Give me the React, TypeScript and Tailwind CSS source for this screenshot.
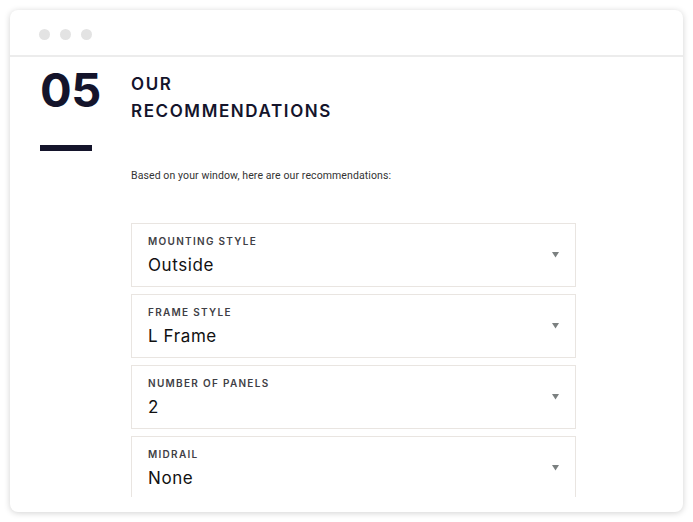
const fields = [
  { label: "MOUNTING STYLE", value: "Outside" },
  { label: "FRAME STYLE", value: "L Frame" },
  { label: "NUMBER OF PANELS", value: "2" },
  { label: "MIDRAIL", value: "None" },
]

function Caret() {
  return (
    <svg width="7" height="6" viewBox="0 0 7 6" className="shrink-0">
      <path d="M0 0 H7 L3.5 5.5 Z" fill="#7b8080" />
    </svg>
  )
}

export default function App() {
  return (
    <div className="w-[693px] h-[522px] bg-white pt-[10px] pl-[10px]" style={{ fontFamily: "Inter, 'Liberation Sans', sans-serif" }}>
      <div className="w-[673px] h-[502px] rounded-[8px] bg-white shadow-[0_1px_6px_rgba(0,0,0,0.18)] flex flex-col overflow-hidden">
        {/* window bar */}
        <div className="h-[47px] shrink-0 border-b-2 border-[#ececec] flex items-center gap-[10px] pl-[29px] pt-[3px]">
          <span className="w-[11px] h-[11px] rounded-full bg-[#e3e3e3]" />
          <span className="w-[11px] h-[11px] rounded-full bg-[#e3e3e3]" />
          <span className="w-[11px] h-[11px] rounded-full bg-[#e3e3e3]" />
        </div>

        <div className="h-[440px] overflow-hidden flex">
          {/* step number */}
          <div className="w-[121px] shrink-0 pl-[30px] pt-[9px]">
            <div className="text-[47px] leading-[47px] font-bold text-[#14142b] tracking-[-0.5px]">05</div>
            <div className="w-[52px] h-[6px] bg-[#14142b] mt-[32px]" />
          </div>

          {/* content */}
          <div className="flex-1 pt-[14px]">
            <h2 className="text-[17px] leading-[27px] font-semibold tracking-[1.6px] text-[#14142b]">
              OUR
              <br />
              RECOMMENDATIONS
            </h2>
            <p className="mt-[43px] text-[10.5px] text-[#333] tracking-[0.1px]" style={{ fontFamily: "Roboto, sans-serif" }}>
              Based on your window, here are our recommendations:
            </p>
            <div className="mt-[39px] w-[445px] flex flex-col gap-[7px]">
              {fields.map((f) => (
                <div
                  key={f.label}
                  className="h-[64px] shrink-0 border-[1.5px] border-[#e9e5e1] flex items-center justify-between pl-[16px] pr-[16px]"
                >
                  <div className="flex flex-col">
                    <span className="text-[10px] leading-[14px] font-semibold tracking-[1.3px] text-[#3f3f46]">{f.label}</span>
                    <span className="mt-[7px] text-[17px] leading-[20px] text-[#111] tracking-[0.6px]">{f.value}</span>
                  </div>
                  <Caret />
                </div>
              ))}
            </div>
          </div>
        </div>
      </div>
    </div>
  )
}
